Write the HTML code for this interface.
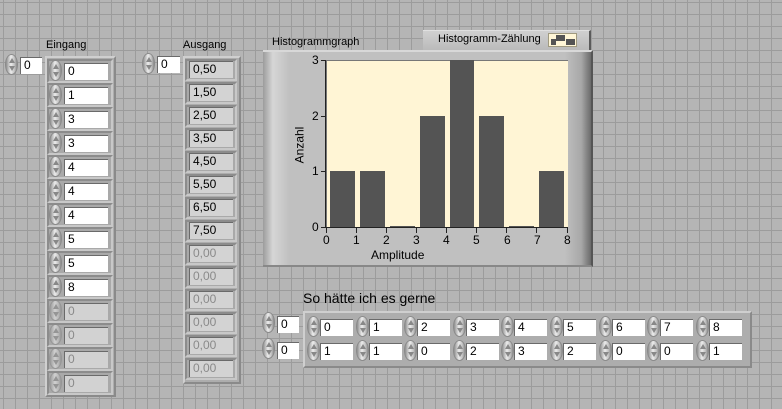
<!DOCTYPE html>
<html><head><meta charset="utf-8"><style>
*{margin:0;padding:0;box-sizing:border-box}
body{width:782px;height:409px;overflow:hidden;position:relative;font-family:"Liberation Sans",sans-serif;
background-color:#b5b5b5;
background-image:linear-gradient(90deg,#9c9c9c 1px,transparent 1px),linear-gradient(#9c9c9c 1px,transparent 1px);
background-size:12px 12px;background-position:3px 2px}
div{position:absolute}
.lbl{font-size:11px;color:#000;white-space:nowrap}
.sp{width:13px;height:21px;border-radius:7px/11px;background:linear-gradient(90deg,#8e8e8e,#ececec 45%,#c4c4c4 75%,#8a8a8a);border:1px solid #8a8a8a}
.sp:before{content:"";position:absolute;left:3px;top:3px;border-left:3px solid transparent;border-right:3px solid transparent;border-bottom:5px solid #888}
.sp:after{content:"";position:absolute;left:3px;bottom:3px;border-left:3px solid transparent;border-right:3px solid transparent;border-top:5px solid #888}
.f{background:#fff;font-size:12px;line-height:15px;height:17px;padding-left:3px;border-top:1px solid #6a6a6a;border-left:1px solid #6a6a6a;color:#000}
.d{background:#d2d2d2;color:#8a8a8a}
.o{background:#d3d3d3;font-size:12px;line-height:15px;height:17px;padding-left:3px;border-top:1px solid #6a6a6a;border-left:1px solid #6a6a6a}
.g{color:#8a8a8a}
.el{background:#a9a9a9;border-top:2px solid #8c8c8c;border-left:2px solid #8c8c8c;border-right:2px solid #c8c8c8;border-bottom:2px solid #c8c8c8}
.fr{background:#adadad;border:2px solid;border-color:#cfcfcf #8a8a8a #8a8a8a #cfcfcf}
.bar{background:#545454}
.tk{font-size:12px}
.tx{width:1px;height:5px;background:#222;top:228px}
.ty{width:5px;height:1px;background:#222;left:321px}
</style></head><body>

<!-- Eingang -->
<div class="lbl" style="left:46px;top:39px">Eingang</div>
<div class="sp" style="left:5px;top:54px"></div>
<div class="f" style="left:20px;top:57px;width:22px">0</div>
<div class="fr" style="left:45px;top:56px;width:71px;height:341px"></div>

<div class="el" style="left:47px;top:59px;width:66px;height:24px"></div><div class="sp" style="left:49px;top:60px"></div><div class="f" style="left:64px;top:63px;width:44px">0</div>
<div class="el" style="left:47px;top:83px;width:66px;height:24px"></div><div class="sp" style="left:49px;top:84px"></div><div class="f" style="left:64px;top:87px;width:44px">1</div>
<div class="el" style="left:47px;top:107px;width:66px;height:24px"></div><div class="sp" style="left:49px;top:108px"></div><div class="f" style="left:64px;top:111px;width:44px">3</div>
<div class="el" style="left:47px;top:131px;width:66px;height:24px"></div><div class="sp" style="left:49px;top:132px"></div><div class="f" style="left:64px;top:135px;width:44px">3</div>
<div class="el" style="left:47px;top:155px;width:66px;height:24px"></div><div class="sp" style="left:49px;top:156px"></div><div class="f" style="left:64px;top:159px;width:44px">4</div>
<div class="el" style="left:47px;top:179px;width:66px;height:24px"></div><div class="sp" style="left:49px;top:180px"></div><div class="f" style="left:64px;top:183px;width:44px">4</div>
<div class="el" style="left:47px;top:203px;width:66px;height:24px"></div><div class="sp" style="left:49px;top:204px"></div><div class="f" style="left:64px;top:207px;width:44px">4</div>
<div class="el" style="left:47px;top:227px;width:66px;height:24px"></div><div class="sp" style="left:49px;top:228px"></div><div class="f" style="left:64px;top:231px;width:44px">5</div>
<div class="el" style="left:47px;top:251px;width:66px;height:24px"></div><div class="sp" style="left:49px;top:252px"></div><div class="f" style="left:64px;top:255px;width:44px">5</div>
<div class="el" style="left:47px;top:275px;width:66px;height:24px"></div><div class="sp" style="left:49px;top:276px"></div><div class="f" style="left:64px;top:279px;width:44px">8</div>
<div class="el" style="left:47px;top:299px;width:66px;height:24px"></div><div class="sp" style="left:49px;top:300px;opacity:.6"></div><div class="f d" style="left:64px;top:303px;width:44px">0</div>
<div class="el" style="left:47px;top:323px;width:66px;height:24px"></div><div class="sp" style="left:49px;top:324px;opacity:.6"></div><div class="f d" style="left:64px;top:327px;width:44px">0</div>
<div class="el" style="left:47px;top:347px;width:66px;height:24px"></div><div class="sp" style="left:49px;top:348px;opacity:.6"></div><div class="f d" style="left:64px;top:351px;width:44px">0</div>
<div class="el" style="left:47px;top:371px;width:66px;height:24px"></div><div class="sp" style="left:49px;top:372px;opacity:.6"></div><div class="f d" style="left:64px;top:375px;width:44px">0</div>

<!-- Ausgang -->
<div class="lbl" style="left:183px;top:39px">Ausgang</div>
<div class="sp" style="left:142px;top:53px"></div>
<div class="f" style="left:157px;top:56px;width:23px">0</div>
<div class="fr" style="left:183px;top:56px;width:58px;height:328px"></div>
<div class="el" style="left:185px;top:59px;width:52px;height:22px"></div><div class="o" style="left:189px;top:61px;width:44px">0,50</div>
<div class="el" style="left:185px;top:82px;width:52px;height:22px"></div><div class="o" style="left:189px;top:84px;width:44px">1,50</div>
<div class="el" style="left:185px;top:105px;width:52px;height:22px"></div><div class="o" style="left:189px;top:107px;width:44px">2,50</div>
<div class="el" style="left:185px;top:128px;width:52px;height:22px"></div><div class="o" style="left:189px;top:130px;width:44px">3,50</div>
<div class="el" style="left:185px;top:151px;width:52px;height:22px"></div><div class="o" style="left:189px;top:153px;width:44px">4,50</div>
<div class="el" style="left:185px;top:174px;width:52px;height:22px"></div><div class="o" style="left:189px;top:176px;width:44px">5,50</div>
<div class="el" style="left:185px;top:197px;width:52px;height:22px"></div><div class="o" style="left:189px;top:199px;width:44px">6,50</div>
<div class="el" style="left:185px;top:220px;width:52px;height:22px"></div><div class="o" style="left:189px;top:222px;width:44px">7,50</div>
<div class="el" style="left:185px;top:243px;width:52px;height:22px"></div><div class="o g" style="left:189px;top:245px;width:44px">0,00</div>
<div class="el" style="left:185px;top:266px;width:52px;height:22px"></div><div class="o g" style="left:189px;top:268px;width:44px">0,00</div>
<div class="el" style="left:185px;top:289px;width:52px;height:22px"></div><div class="o g" style="left:189px;top:291px;width:44px">0,00</div>
<div class="el" style="left:185px;top:312px;width:52px;height:22px"></div><div class="o g" style="left:189px;top:314px;width:44px">0,00</div>
<div class="el" style="left:185px;top:335px;width:52px;height:22px"></div><div class="o g" style="left:189px;top:337px;width:44px">0,00</div>
<div class="el" style="left:185px;top:358px;width:52px;height:22px"></div><div class="o g" style="left:189px;top:360px;width:44px">0,00</div>

<!-- Graph -->
<div class="lbl" style="left:272px;top:36px">Histogrammgraph</div>
<div style="left:423px;top:30px;width:168px;height:22px;background:linear-gradient(#d0d0d0,#b8b8b8);border-top:1px solid #e0e0e0;border-right:2px solid #5a5a5a"></div>
<div class="lbl" style="left:438px;top:33px">Histogramm-Zählung</div>
<div style="left:548px;top:33px;width:29px;height:14px;background:#fff6d6;border:1px solid #a09a80"></div>
<div class="bar" style="left:551px;top:39px;width:5px;height:6px"></div>
<div class="bar" style="left:556px;top:35px;width:9px;height:6px"></div>
<div class="bar" style="left:566px;top:39px;width:9px;height:6px"></div>
<div style="left:263px;top:50px;width:330px;height:217px;background:linear-gradient(90deg,#9c9c9c,#d6d6d6 3%,#c0c0c0 8%,#c0c0c0 92%,#a8a8a8 97%,#6a6a6a);border-top:2px solid #d8d8d8;border-bottom:2px solid #888;border-right:2px solid #555"></div>
<div style="left:326px;top:60px;width:242px;height:168px;background:#fff5d5;border-left:1px solid #777;border-top:1px solid #777"></div>
<div class="bar" style="left:330px;top:171px;width:25px;height:56px"></div>
<div class="bar" style="left:360px;top:171px;width:25px;height:56px"></div>
<div class="bar" style="left:390px;top:226px;width:25px;height:1px"></div>
<div class="bar" style="left:420px;top:116px;width:25px;height:111px"></div>
<div class="bar" style="left:450px;top:60px;width:24px;height:167px"></div>
<div class="bar" style="left:479px;top:116px;width:25px;height:111px"></div>
<div class="bar" style="left:509px;top:226px;width:25px;height:1px"></div>
<div class="bar" style="left:539px;top:171px;width:25px;height:56px"></div>
<div style="left:326px;top:227px;width:242px;height:1px;background:#222"></div>
<div style="left:325px;top:60px;width:1px;height:168px;background:#222"></div>
<div class="tx" style="left:326px"></div><div class="tx" style="left:356px"></div><div class="tx" style="left:386px"></div>
<div class="tx" style="left:416px"></div><div class="tx" style="left:446px"></div><div class="tx" style="left:476px"></div>
<div class="tx" style="left:506px"></div><div class="tx" style="left:536px"></div><div class="tx" style="left:567px"></div>
<div class="ty" style="top:60px"></div><div class="ty" style="top:116px"></div><div class="ty" style="top:171px"></div><div class="ty" style="top:227px"></div>
<div class="tk" style="left:312px;top:53px">3</div><div class="tk" style="left:312px;top:109px">2</div>
<div class="tk" style="left:312px;top:164px">1</div><div class="tk" style="left:312px;top:220px">0</div>
<div class="tk" style="left:323px;top:233px">0</div><div class="tk" style="left:353px;top:233px">1</div>
<div class="tk" style="left:383px;top:233px">2</div><div class="tk" style="left:413px;top:233px">3</div>
<div class="tk" style="left:443px;top:233px">4</div><div class="tk" style="left:473px;top:233px">5</div>
<div class="tk" style="left:504px;top:233px">6</div><div class="tk" style="left:534px;top:233px">7</div>
<div class="tk" style="left:564px;top:233px">8</div>
<div class="lbl" style="left:371px;top:248px;font-size:12px">Amplitude</div>
<div class="lbl" style="left:281px;top:138px;transform:rotate(-90deg);font-size:12px">Anzahl</div>

<!-- 2D array -->
<div style="left:303px;top:290px;font-size:14px">So hätte ich es gerne</div>
<div class="sp" style="left:262px;top:312px"></div><div class="f" style="left:277px;top:316px;width:22px">0</div>
<div class="sp" style="left:262px;top:338px"></div><div class="f" style="left:277px;top:342px;width:22px">0</div>
<div class="fr" style="left:303px;top:311px;width:449px;height:57px"></div>

<div class="sp" style="left:307px;top:316px"></div><div class="f" style="left:320px;top:319px;width:33px">0</div>
<div class="sp" style="left:356px;top:316px"></div><div class="f" style="left:369px;top:319px;width:33px">1</div>
<div class="sp" style="left:404px;top:316px"></div><div class="f" style="left:417px;top:319px;width:33px">2</div>
<div class="sp" style="left:453px;top:316px"></div><div class="f" style="left:466px;top:319px;width:33px">3</div>
<div class="sp" style="left:501px;top:316px"></div><div class="f" style="left:514px;top:319px;width:33px">4</div>
<div class="sp" style="left:550px;top:316px"></div><div class="f" style="left:563px;top:319px;width:33px">5</div>
<div class="sp" style="left:599px;top:316px"></div><div class="f" style="left:612px;top:319px;width:33px">6</div>
<div class="sp" style="left:647px;top:316px"></div><div class="f" style="left:660px;top:319px;width:33px">7</div>
<div class="sp" style="left:696px;top:316px"></div><div class="f" style="left:709px;top:319px;width:33px">8</div>

<div class="sp" style="left:307px;top:340px"></div><div class="f" style="left:320px;top:343px;width:33px">1</div>
<div class="sp" style="left:356px;top:340px"></div><div class="f" style="left:369px;top:343px;width:33px">1</div>
<div class="sp" style="left:404px;top:340px"></div><div class="f" style="left:417px;top:343px;width:33px">0</div>
<div class="sp" style="left:453px;top:340px"></div><div class="f" style="left:466px;top:343px;width:33px">2</div>
<div class="sp" style="left:501px;top:340px"></div><div class="f" style="left:514px;top:343px;width:33px">3</div>
<div class="sp" style="left:550px;top:340px"></div><div class="f" style="left:563px;top:343px;width:33px">2</div>
<div class="sp" style="left:599px;top:340px"></div><div class="f" style="left:612px;top:343px;width:33px">0</div>
<div class="sp" style="left:647px;top:340px"></div><div class="f" style="left:660px;top:343px;width:33px">0</div>
<div class="sp" style="left:696px;top:340px"></div><div class="f" style="left:709px;top:343px;width:33px">1</div>
</body></html>
